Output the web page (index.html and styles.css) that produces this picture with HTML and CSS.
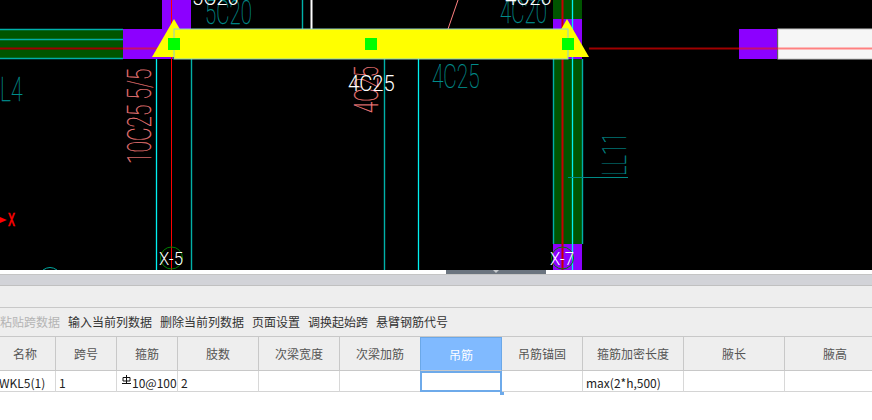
FILE: index.html
```html
<!DOCTYPE html>
<html lang="zh">
<head>
<meta charset="utf-8">
<title>WKL5 梁平法表格</title>
<link rel="stylesheet" href="styles.css">
</head>
<body>
<div class="app">
  <div class="canvas">
    <svg class="cad" width="872" height="270" viewBox="0 0 872 270" xmlns="http://www.w3.org/2000/svg">
      <rect class="beam-green" x="0" y="29" width="123" height="30"/>
      <rect class="purple" x="123" y="29" width="50" height="30"/>
      <rect class="purple" x="162" y="0" width="29" height="30"/>
      <rect class="beam-green" x="553" y="0" width="29" height="270"/>
      <rect class="purple" x="553" y="19" width="29" height="40"/>
      <rect class="purple" x="553" y="244" width="29" height="26"/>
      <rect class="purple" x="739" y="29" width="38" height="30"/>
      <rect class="white-beam" x="778" y="29" width="95" height="30"/>

      <path class="teal" d="M0 29.500H123M0 39.500H123M0 58.500H123"/>
      <path class="dark-red" d="M0 48.500H123M589 48.500H739"/>
      <path class="magenta" d="M123 48.500H172M739 48.500H778"/>
      <path class="salmon-line" d="M778 48.500H872"/>
      <path class="salmon-thin" d="M448 29L458 0"/>
      <path class="red" d="M171.500 0V270"/>
      <path class="dark-red-2" d="M562.500 0V270"/>
      <path class="cyan" d="M156.500 59V270M418.500 59V270M572.500 0V270"/>
      <path class="teal" d="M191.500 59V270M384.500 59V270M553.500 59V244M582.500 59V244M302.500 0V29"/>
      <path class="white-line" d="M311.500 0V29"/>
      <path class="teal-thin" d="M568 177.500H628"/>

      <polygon class="yellow" points="174,19 152,57 196,57"/>
      <polygon class="yellow" points="567,19 545,57 589,57"/>
      <rect class="beam" x="174" y="29" width="394" height="30"/>
      <rect class="handle" x="168" y="38" width="12" height="12"/>
      <rect class="handle" x="365" y="38" width="12" height="12"/>
      <rect class="handle" x="562" y="38" width="12" height="12"/>

      <circle class="axis" cx="171.500" cy="258" r="11"/>
      <circle class="axis" cx="562.500" cy="258" r="11"/>
      <path class="arc" d="M43 270Q50 265 57 270"/>
      <polygon class="red-fill" points="0,217 7,220 0,223"/>

      <text class="t t-red" transform="translate(8 226) scale(.62 1)">X</text>
      <text class="t t-teal" transform="translate(0 101) scale(.64 1)">L4</text>
      <text class="t t-teal" transform="translate(205 24) scale(.62 1)">5C20</text>
      <text class="t t-teal" transform="translate(500 23) scale(.62 1)">4C20</text>
      <text class="t t-teal" transform="translate(432 88) scale(.63 1)">4C25</text>
      <text class="t t-teal" transform="translate(626 176) rotate(-90) scale(.62 1)">LL11</text>
      <text class="t t-salmon" transform="translate(151 164) rotate(-90) scale(.635 1)">10C25 5/5</text>
      <text class="t t-salmon" transform="translate(378 113) rotate(-90) scale(.62 1)">4C25</text>
      <text class="l" transform="translate(348 91) scale(.92 1)">4C25</text>
      <text class="l" transform="translate(192 5) scale(.92 1)">5C20</text>
      <text class="l" transform="translate(505 5) scale(.92 1)">4C20</text>
      <text class="l l-axis" transform="translate(159 265) scale(.88 1)">X-5</text>
      <text class="l l-axis" transform="translate(550 265) scale(.88 1)">X-7</text>
    </svg>
  </div>

  <div class="split"><div class="split-handle"><span class="split-arrow"></span></div></div>
  <div class="band"></div>
  <div class="bar-empty"></div>

  <div class="toolbar">
    <span class="tool tool-off">粘贴跨数据</span>
    <span class="tool">输入当前列数据</span>
    <span class="tool">删除当前列数据</span>
    <span class="tool">页面设置</span>
    <span class="tool">调换起始跨</span>
    <span class="tool">悬臂钢筋代号</span>
  </div>

  <div class="table">
    <div class="th">名称</div>
    <div class="th">跨号</div>
    <div class="th">箍筋</div>
    <div class="th">肢数</div>
    <div class="th">次梁宽度</div>
    <div class="th">次梁加筋</div>
    <div class="th th-sel">吊筋</div>
    <div class="th">吊筋锚固</div>
    <div class="th">箍筋加密长度</div>
    <div class="th">腋长</div>
    <div class="th">腋高</div>

    <div class="td td-name">WKL5(1)</div>
    <div class="td">1</div>
    <div class="td td-clip"><svg class="bar-sym" width="9" height="10" viewBox="0 0 9 10" xmlns="http://www.w3.org/2000/svg"><path d="M4.500 0V9M1 2.500H8V6H1ZM0 8.500H9"/></svg>10@100</div>
    <div class="td">2</div>
    <div class="td"></div>
    <div class="td"></div>
    <div class="td td-sel"><span class="sel-dot"></span></div>
    <div class="td"></div>
    <div class="td">max(2*h,500)</div>
    <div class="td"></div>
    <div class="td"></div>
  </div>
</div>
</body>
</html>
```

FILE: styles.css
```css
* { box-sizing: border-box; }
html, body { margin: 0; padding: 0; background: #fff; }
body { width: 872px; height: 420px; overflow: hidden; font-family: "Noto Sans CJK SC", "Noto Sans", sans-serif; font-size: 12px; }
.app { display: flex; flex-direction: column; width: 872px; height: 420px; overflow: hidden; }

.canvas { height: 270px; background: #000; flex: none; }
.cad { display: block; }
.beam-green { fill: #005500; }
.purple { fill: #8c00ff; }
.white-beam { fill: #f6f6f6; stroke: #c4c4c4; stroke-width: 1; }
.yellow { fill: #ffff00; }
.beam { fill: #ffff00; stroke: #8fd0c8; stroke-width: 1; }
.handle { fill: #00ff00; }
.teal, .cyan, .dark-red, .magenta, .salmon-line, .salmon-thin, .red, .dark-red-2, .white-line, .teal-thin, .axis, .arc { fill: none; stroke-width: 1; }
.teal { stroke: #00b0a8; stroke-width: 1.4; }
.teal-thin { stroke: #008a86; }
.cyan { stroke: #00f0f0; stroke-width: 1.3; }
.dark-red { stroke: #a00000; stroke-width: 2; }
.magenta { stroke: #c8106a; stroke-width: 2; }
.salmon-line { stroke: #ff8080; stroke-width: 2; }
.salmon-thin { stroke: #ff8080; }
.red { stroke: #ff0000; }
.dark-red-2 { stroke: #c80000; stroke-width: 2; }
.white-line { stroke: #fff; stroke-width: 2; }
.axis { stroke: #007f00; }
.arc { stroke: #00a8a0; }
.red-fill { fill: #ff0000; }

.t { font-family: "Roboto", "Liberation Sans", sans-serif; font-weight: 100; font-size: 33px; stroke-width: .25px; }
.t-red { fill: #ff0000; stroke: #ff0000; stroke-width: .6px; font-size: 18px; font-weight: 400; }
.t-teal { fill: #008c8c; stroke: #008c8c; }
.t-salmon { fill: #f07c7c; stroke: #f07c7c; }
.l { font-family: "Roboto", "Liberation Sans", sans-serif; font-weight: 300; font-size: 22px; fill: #fff; }
.l-axis { font-size: 19px; }

.split { height: 4px; flex: none; background: #fff; padding-left: 446px; }
.split-handle { width: 100px; height: 4px; background: #6b747f; display: flex; justify-content: center; }
.split-arrow { width: 0; height: 0; border-left: 3px solid transparent; border-right: 3px solid transparent; border-top: 3px solid #c4c8cc; }
.band { height: 12px; flex: none; background: #d2d3d8; border-top: 1px solid #c4c4c4; border-bottom: 1px solid #c0c0c0; }
.bar-empty { height: 22px; flex: none; background: #eeeeee; border-bottom: 1px solid #c8c8c8; }
.toolbar { height: 29px; flex: none; display: flex; align-items: center; gap: 8px; background: #eeeeee; border-bottom: 1px solid #c8c8c8; color: #333; line-height: 1; }
.tool { white-space: nowrap; }
.tool-off { color: #b4b4b4; }

.table { display: grid; grid-template-columns: 61px 61px 61px 81px 81px 81px 81px 81px 101px 101px 101px; grid-template-rows: 34px 21px; margin-left: -5px; width: 877px; }
.th { display: flex; align-items: center; justify-content: center; background: #eeeeee; color: #555; border-right: 1px solid #c8c8c8; border-bottom: 1px solid #c8c8c8; }
.th-sel { background: #80baff; color: #fff; border: 1px solid #6ba8e8; border-bottom-color: #c8c8c8; margin-left: -1px; }
.td { position: relative; display: flex; align-items: center; padding: 2px 0 0 3px; background: #fff; color: #222; border-right: 1px solid #d8d8d8; border-bottom: 1px solid #d4d4d4; white-space: nowrap; overflow: hidden; }
.td-name { padding-left: 4px; }
.td-clip { padding-left: 5px; }
.td-sel { border: 2px solid #6eaaea; margin-left: -1px; overflow: visible; }
.sel-dot { position: absolute; right: -4px; bottom: -5px; width: 4px; height: 4px; background: #6eaaea; }
.bar-sym { flex: none; margin: 0 1px 4px 0; }
.bar-sym path { fill: none; stroke: #111; stroke-width: 1; }
```
